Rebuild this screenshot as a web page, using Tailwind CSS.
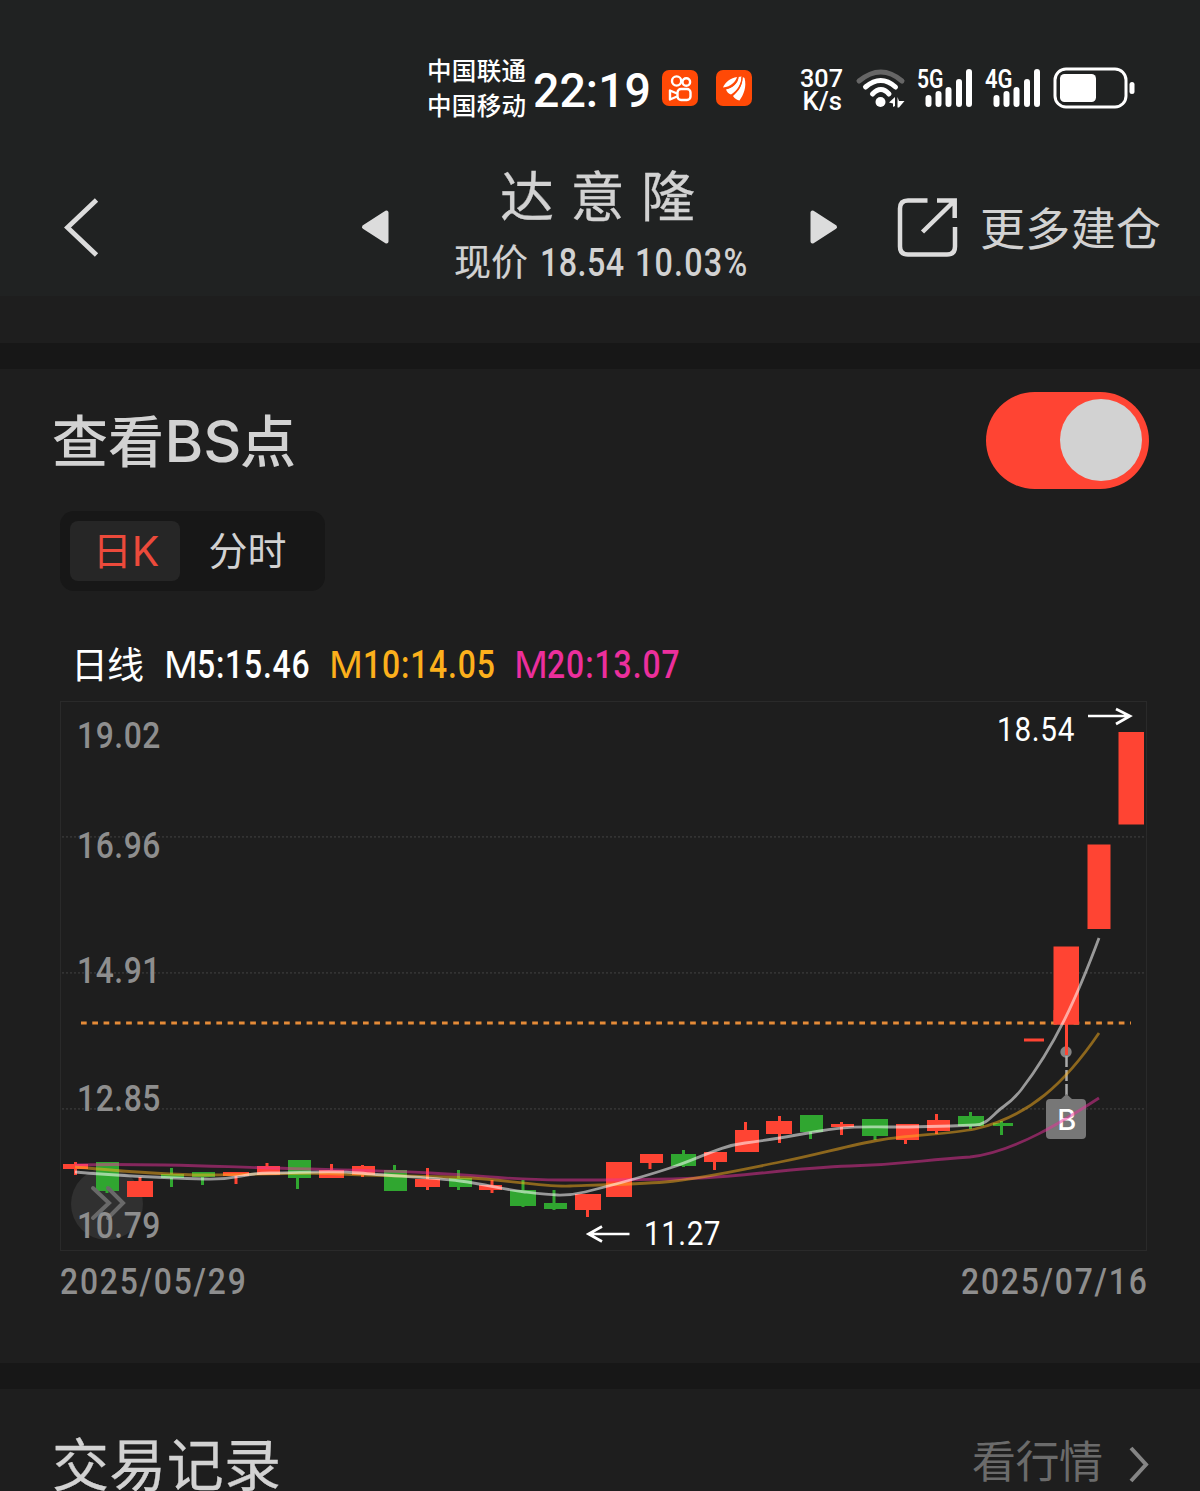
<!DOCTYPE html>
<html lang="zh-CN">
<head>
<meta charset="utf-8">
<title>达意隆</title>
<script src="https://cdn.jsdelivr.net/npm/@tailwindcss/browser@4"></script>
</head>
<body class="w-[1200px] h-[1491px] overflow-hidden bg-[#1e1e1e] font-['Noto_Sans_CJK_SC',sans-serif] text-[#d2d2d2]">
<div class="flex flex-col w-[1200px] h-[1491px] overflow-hidden">

  <!-- status bar -->
  <div class="h-[150px] shrink-0 bg-[#202222] flex items-start text-white pl-[427px] pt-[50px]">
    <svg class="w-[355px] h-20 shrink-0" viewBox="427 50 355 80" fill="#fff">
      <g font-family="Noto Sans CJK SC, sans-serif" font-size="24.5" font-weight="500">
        <text x="427" y="80" textLength="99">中国联通</text>
        <text x="427" y="115" textLength="99">中国移动</text>
      </g>
      <text x="533" y="107" font-family="Roboto, sans-serif" font-weight="500" font-size="49" textLength="118" lengthAdjust="spacingAndGlyphs">22:19</text>
      <rect x="662" y="70" width="36" height="36" rx="7" fill="#ff4906"/>
      <g fill="none" stroke="#fff" stroke-width="2.400">
        <circle cx="676.600" cy="81" r="4.600"/><circle cx="686.300" cy="82" r="3.800"/>
        <rect x="677.500" y="89" width="13" height="11" rx="3.500"/>
        <path d="M677 93.500L670 90.500V99.500L677 96.500" stroke-linejoin="round"/>
      </g>
      <rect x="716" y="70" width="36" height="36" rx="7" fill="#ff4906"/>
      <path d="M723 87.500C725 82 731 78 737 77C736 81 731 87 723 87.500Z"/>
      <path d="M726 89.500C733 88 738 83 738.500 77L741.500 76.500C741.500 84 737 91 731 94.500C728.500 94 727 92 726 89.500Z"/>
      <path d="M733 96C739 91 742.500 85 742.700 77L744.500 78C747 87 743.500 95 739.500 100.500C737 100 734.500 98.500 733 96Z"/>
      <path d="M726.500 88.500C734 86.500 738 82 738 77M732 95.500C739 90.500 742 84 742 77" fill="none" stroke="#ff4906" stroke-width="1"/>
    </svg>
    <svg class="w-[370px] h-20 shrink-0 ml-2" viewBox="790 50 370 80" fill="#fff">
      <g font-family="Roboto, sans-serif" font-weight="500">
        <text x="800" y="87" font-size="26.500" textLength="43" lengthAdjust="spacingAndGlyphs">307</text>
        <text x="802.500" y="110" font-size="26" textLength="39.500" lengthAdjust="spacingAndGlyphs">K/s</text>
        <text x="917" y="88" font-size="25" font-weight="600" textLength="26.500" lengthAdjust="spacingAndGlyphs">5G</text>
        <text x="985" y="88" font-size="25" font-weight="600" textLength="27.500" lengthAdjust="spacingAndGlyphs">4G</text>
      </g>
      <g fill="none" stroke="#fff" stroke-width="5" stroke-linecap="round">
        <path d="M859 81Q881 63 902 81" stroke="#666"/>
        <path d="M865.500 87Q881 74 895.500 87"/><path d="M872.500 94Q881 85 889 94"/>
      </g>
      <circle cx="880.500" cy="102" r="5"/>
      <path d="M889 102.500L895 97V106L893 107V103.500ZM897.500 97L899 101H904.500L899 107.500H897.500Z"/>
      <g stroke="#fff" stroke-width="6" stroke-linecap="round">
        <path d="M928.500 98V104M938.500 94V104M948.500 90V104M959 82V104M969 72V104"/>
        <path d="M996.500 98V104M1006.500 94V104M1016.500 90V104M1027 82V104M1037 72V104"/>
      </g>
      <rect x="1055" y="69" width="71" height="38" rx="11" fill="none" stroke="#fff" stroke-width="3"/>
      <rect x="1060" y="74" width="36" height="28" rx="4.500"/>
      <rect x="1129.500" y="82" width="5" height="12" rx="2.500"/>
    </svg>
  </div>

  <!-- title bar -->
  <div class="h-[146px] shrink-0 bg-[#202222] flex items-start">
    <svg class="w-[400px] h-[146px] shrink-0" viewBox="0 150 400 146">
      <path d="M96.500 200L67.500 227.500L96.500 255" fill="none" stroke="#dcdcdc" stroke-width="4.800"/>
      <path d="M364 227L386.500 212.500V241.500Z" fill="#dcdcdc" stroke="#dcdcdc" stroke-width="4" stroke-linejoin="round"/>
    </svg>
    <svg class="w-[400px] h-[146px] shrink-0" viewBox="400 150 400 146" fill="#d2d2d2">
      <g font-family="Noto Sans CJK SC, sans-serif" stroke="#d2d2d2">
        <text x="500" y="217" font-size="54" textLength="195" stroke-width=".3">达意隆</text>
        <text x="454" y="275.500" font-size="37" textLength="74" stroke-width=".2">现价</text>
      </g>
      <g font-family="Roboto, sans-serif" font-size="38" font-weight="500">
        <text transform="translate(540 276) scale(.85 1)" textLength="99">18.54</text>
        <text transform="translate(635 276) scale(.85 1)" textLength="132">10.03%</text>
      </g>
    </svg>
    <svg class="w-[400px] h-[146px] shrink-0" viewBox="800 150 400 146">
      <path d="M835 227L812.500 212.500V241.500Z" fill="#dcdcdc" stroke="#dcdcdc" stroke-width="4" stroke-linejoin="round"/>
      <g fill="none" stroke="#dcdcdc" stroke-width="4.500">
        <path d="M927.500 200.500H908Q900 200.500 900 208.500V246.500Q900 254.500 908 254.500H947Q955 254.500 955 246.500V227"/>
        <path d="M937 200.500H954.700V218M954.700 200.500L922.500 232"/>
      </g>
      <text x="980" y="245.500" font-family="Noto Sans CJK SC, sans-serif" font-size="45" fill="#d2d2d2" textLength="181">更多建仓</text>
    </svg>
  </div>
  <div class="h-[47px] shrink-0"></div>
  <div class="h-[26px] shrink-0 bg-[#171717]"></div>

  <!-- buy / sell points -->
  <section class="h-[994px] shrink-0 flex flex-col">
    <div class="flex justify-between pl-[50px] pr-[51px] pt-[23px]">
      <svg class="w-[260px] h-[97px]" viewBox="50 392 260 97" fill="#d2d2d2" font-family="Noto Sans CJK SC, sans-serif" font-weight="500">
        <text x="52" y="462" font-size="56" textLength="112">查看</text>
        <text x="164.500" y="462" font-family="Inter, sans-serif" font-size="57" textLength="77" lengthAdjust="spacingAndGlyphs">BS</text>
        <text x="240" y="462" font-size="56">点</text>
      </svg>
      <div class="w-[163px] h-[97px] rounded-full bg-[#ff4433] flex items-center justify-end pr-[7px] pb-0.5">
        <div class="size-[82px] rounded-full bg-[#d2d2d2]"></div>
      </div>
    </div>
    <div class="ml-[60px] mt-[22px] w-[265px] h-20 rounded-[14px] bg-[#171717] p-2.5 flex text-[39px]">
      <div class="w-[110px] h-[60px] rounded-lg bg-[#262626] text-[#ec4a3b] flex items-center justify-center leading-[54px] pb-1.5 pl-0.5">日<span class="font-['Inter'] font-normal text-[41px] pt-1.5">K</span></div>
      <div class="flex-1 flex items-center justify-center leading-[54px] pb-1.5">分时</div>
    </div>

    <svg class="w-[1200px] h-[740px] shrink-0" viewBox="0 591 1200 740">
      <!-- moving average legend -->
      <text x="71" y="678.500" font-family="Noto Sans CJK SC, sans-serif" font-size="37" fill="#fff" textLength="73">日线</text>
      <g font-family="Inter, sans-serif" font-size="37">
        <text x="164" y="678" fill="#fff" textLength="34" lengthAdjust="spacingAndGlyphs">M</text>
        <text x="329" y="678" fill="#fcb01c" textLength="34" lengthAdjust="spacingAndGlyphs">M</text>
        <text x="514" y="678" fill="#ec2f9c" textLength="34" lengthAdjust="spacingAndGlyphs">M</text>
      </g>
      <g font-family="Roboto, sans-serif" font-size="38" font-weight="500">
        <text transform="translate(197 678) scale(.84 1)" fill="#fff" textLength="134">5:15.46</text>
        <text transform="translate(363 678) scale(.84 1)" fill="#fcb01c" textLength="157">10:14.05</text>
        <text transform="translate(547 678) scale(.84 1)" fill="#ec2f9c" textLength="158">20:13.07</text>
      </g>
      <rect x="60.500" y="701.500" width="1086" height="549" fill="none" stroke="#2a2a2a"/>
      <path d="M62 836.800H1146M62 972.800H1146M62 1108.800H1146" stroke="#333" stroke-width="1.800" stroke-dasharray="2 2"/>
      <circle cx="107" cy="1204" r="36" fill="#303030"/>

      <!-- candles: falling -->
      <path fill="#30a630" d="M96 1162h23v29h-23zM161 1174h23v4h-23zM192 1172h23v5h-23zM288 1160h23v18h-23zM384 1170h23v21h-23zM449 1178h23v9h-23zM510 1190h26v16h-26zM544 1203h23v6h-23zM671 1154h25v12h-25zM800 1115h23v17h-23zM862 1119h26v17h-26zM958 1116h26v10h-26zM993 1123h20v3h-20z"/>
      <path stroke="#30a630" stroke-width="3" d="M107 1190v3M171.500 1168v19M202.500 1172v13M297.500 1177v12M394.500 1165v6M458.500 1170v20M523 1180v27M554 1190v20M683.500 1150v17M810.500 1131v8M875 1135v5M970.500 1112v17M1001.500 1121v14"/>
      <!-- candles: rising -->
      <path fill="#ff4433" d="M63 1164h25v5h-25zM127 1181h26v16h-26zM223 1172h26v4h-26zM257 1166h23v9h-23zM319 1170h25v8h-25zM352 1166h23v9h-23zM415 1179h25v8h-25zM479 1185h23v5h-23zM575 1194h26v16h-26zM606 1162h26v35h-26zM640 1154h23v9h-23zM704 1152h23v10h-23zM735 1130h24v22h-24zM766 1121h26v13h-26zM831 1124h23v3h-23zM896 1124h23v16h-23zM927 1120h23v11h-23zM1024 1038.500h20v3h-20zM1053.500 946.500h25.500v78h-25.500zM1087.500 844.500h23v84.500h-23zM1118.500 732h25.500v92.500h-25.500z"/>
      <path stroke="#ff4433" stroke-width="3" d="M75.500 1162v13M140 1177v5M236 1172v12M267 1163v4M331.500 1164v7M362.500 1165v12M427.500 1168v22M492 1180v13M587.500 1210v7M650 1162v7M714.500 1161v9M745.500 1122v9M779.500 1116v27M841.500 1122v13M905.500 1139v5M936.500 1114v20"/>

      <!-- cost line -->
      <path d="M81 1023H1131" stroke="#e58b38" stroke-width="3" stroke-dasharray="5.700 5.580"/>
      <path fill="#ff4433" d="M1053.500 1010h25.500v14.500h-25.500z"/>

      <!-- marker of the purchase -->
      <circle cx="1066" cy="1052" r="5.700" fill="#858585"/>
      <path d="M1066.500 1024V1055" stroke="#ff4433" stroke-width="3"/>
      <path d="M1066.500 1056V1097" stroke="#aaa" stroke-width="2.500" stroke-dasharray="11 3"/>
      <path d="M1060 1100L1066.500 1094L1073 1100Z" fill="#777"/>
      <rect x="1046" y="1099" width="40" height="40" rx="4" fill="#777"/>
      <text x="1066.800" y="1129.500" text-anchor="middle" font-family="Inter, sans-serif" font-size="29" font-weight="500" fill="#fff">B</text>

      <!-- moving averages -->
      <g fill="none" stroke-width="2.800">
        <path stroke="#ec2f9c" stroke-opacity=".5" d="M75 1165C140 1163 200 1166 270 1168S370 1170 430 1173S510 1180 560 1180S650 1180 700 1178S790 1168 850 1166S920 1160 970 1157C1015 1152 1065 1120 1099 1098"/>
        <path stroke="#fcb01c" stroke-opacity=".5" d="M75 1167C110 1170 160 1175 205 1175S300 1172 340 1174S430 1176 470 1178S540 1187 570 1186S640 1184 665 1182C700 1179 740 1170 780 1162S850 1145 880 1140S950 1134 975 1129C1030 1116 1065 1083 1099 1033"/>
        <path stroke="#fff" stroke-opacity=".55" d="M75 1172C110 1175 170 1178 205 1179S240 1173 270 1173S330 1170 360 1173S430 1177 460 1181S500 1189 525 1192S565 1197 585 1192S640 1178 670 1168S720 1146 745 1143S790 1136 820 1131S860 1127 890 1127S950 1126 975 1125C987 1125 993 1114 1003 1107S1017 1095 1021 1090C1055 1046 1077 997 1099 938"/>
      </g>

      <!-- price scale -->
      <path d="M93 1188L109 1203L93 1218M108 1188L123 1203L108 1218" fill="none" stroke="#696969" stroke-width="4" stroke-linecap="round"/>
      <g font-family="Roboto, sans-serif" font-size="37" font-weight="500" fill="#8e8e8e">
        <text transform="translate(77 748) scale(.86 1)" textLength="97">19.02</text>
        <text transform="translate(77 858) scale(.86 1)" textLength="97">16.96</text>
        <text transform="translate(77 983) scale(.86 1)" textLength="97">14.91</text>
        <text transform="translate(77 1111) scale(.86 1)" textLength="97">12.85</text>
        <text transform="translate(77 1238) scale(.86 1)" textLength="97">10.79</text>
        <text transform="translate(60 1294) scale(.86 1)" textLength="216">2025/05/29</text>
        <text transform="translate(961 1294) scale(.86 1)" textLength="216">2025/07/16</text>
      </g>
      <g font-family="Roboto, sans-serif" font-size="33" fill="#fff">
        <text transform="translate(997 741) scale(.9 1)" textLength="86">18.54</text>
        <text transform="translate(644 1245) scale(.9 1)" textLength="85">11.27</text>
      </g>
      <g fill="none" stroke="#fff" stroke-width="2.700">
        <path d="M1088 716H1130M1116 709L1130 716L1116 724"/>
        <path d="M629.500 1234H589M602 1226.500L588.500 1234L602 1241.500"/>
      </g>
    </svg>
  </section>
  <div class="h-[26px] shrink-0 bg-[#171717]"></div>

  <!-- trade records -->
  <div class="h-[102px] shrink-0 flex justify-between">
    <svg class="w-[300px] h-[102px]" viewBox="0 1389 300 102"><text x="52" y="1485.500" font-family="Noto Sans CJK SC, sans-serif" font-size="57" fill="#d2d2d2" stroke="#d2d2d2" stroke-width=".3" textLength="229">交易记录</text></svg>
    <svg class="w-[240px] h-[102px]" viewBox="960 1389 240 102">
      <text x="972" y="1477.500" font-family="Noto Sans CJK SC, sans-serif" font-size="44" fill="#6b6b6b" textLength="131">看行情</text>
      <path d="M1131 1448L1146 1464.500L1131 1481" fill="none" stroke="#858585" stroke-width="4"/>
    </svg>
  </div>
</div>
</body>
</html>
